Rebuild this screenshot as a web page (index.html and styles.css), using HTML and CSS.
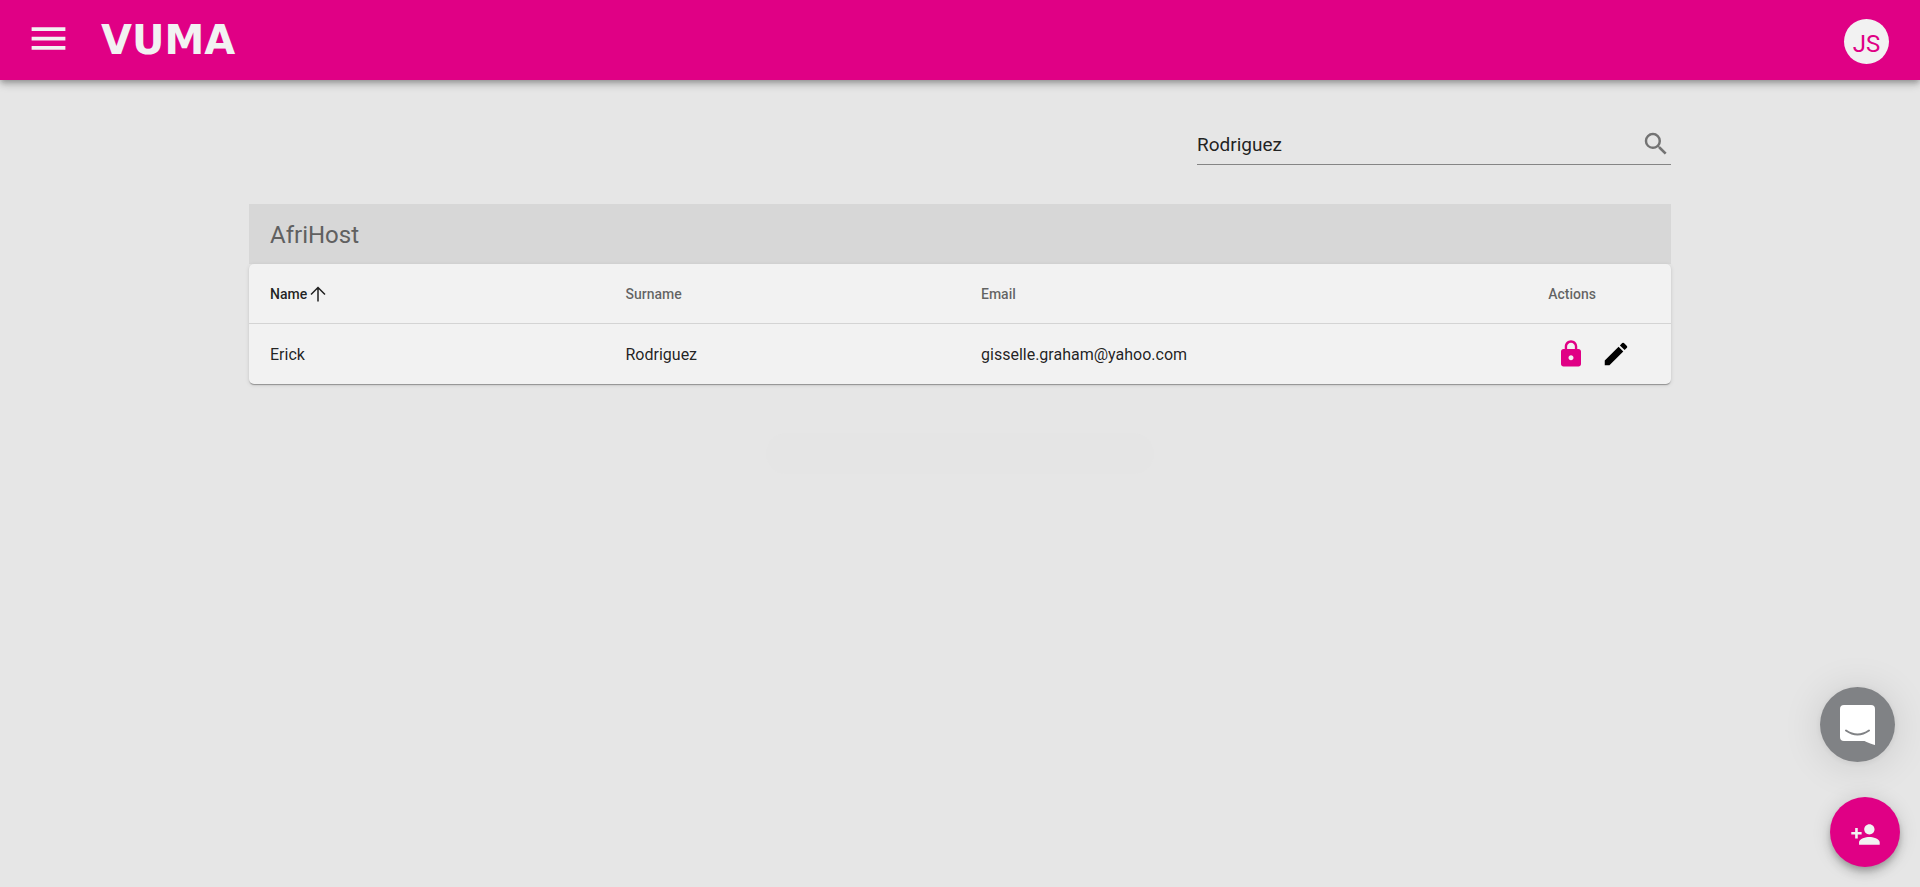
FILE: index.html
```html
<!DOCTYPE html>
<html lang="en">
<head>
<meta charset="utf-8">
<meta name="viewport" content="width=device-width, initial-scale=1">
<title>Vuma – Users</title>
<link rel="stylesheet" href="styles.css">
</head>
<body>
<header class="topbar">
  <button class="menu-button" type="button" aria-label="Open menu">
    <svg class="icon-menu" viewBox="0 0 24 24" aria-hidden="true"><path d="M3 18h18v-2H3v2zm0-5h18v-2H3v2zm0-7v2h18V6H3z"/></svg>
  </button>
  <a class="brand" href="#">VUMA</a>
  <button class="avatar" type="button" aria-label="Account JS">JS</button>
</header>

<main class="page">
  <form class="search" role="search">
    <input class="search-input" type="text" value="Rodriguez" aria-label="Search users">
    <button class="icon-button search-button" type="button" aria-label="Search">
      <svg class="icon" viewBox="0 0 24 24" aria-hidden="true"><path d="M15.5 14h-.79l-.28-.27A6.471 6.471 0 0 0 16 9.5 6.5 6.5 0 1 0 9.5 16c1.61 0 3.09-.59 4.23-1.57l.27.28v.79l5 4.99L20.49 19l-4.99-5zm-6 0C7.01 14 5 11.99 5 9.5S7.01 5 9.5 5 14 7.01 14 9.5 11.99 14 9.5 14z"/></svg>
    </button>
  </form>

  <section class="group">
    <h1 class="group-title">AfriHost</h1>
    <table class="users">
      <thead>
        <tr>
          <th scope="col" aria-sort="ascending">
            <button class="sort sorted" type="button">Name
              <svg class="icon-sort" viewBox="0 0 20 20" aria-hidden="true"><path d="M10 17.500V3.500M3 10.500l7-7 7 7"/></svg>
            </button>
          </th>
          <th scope="col"><button class="sort" type="button">Surname</button></th>
          <th scope="col"><button class="sort" type="button">Email</button></th>
          <th scope="col" class="actions-head">Actions</th>
        </tr>
      </thead>
      <tbody>
        <tr>
          <td>Erick</td>
          <td>Rodriguez</td>
          <td>gisselle.graham@yahoo.com</td>
          <td>
            <div class="actions">
              <button class="icon-button lock" type="button" aria-label="Lock user">
                <svg class="icon" viewBox="0 0 24 24" aria-hidden="true"><path d="M18 8h-1V6c0-2.76-2.24-5-5-5S7 3.24 7 6v2H6c-1.1 0-2 .9-2 2v10c0 1.1.9 2 2 2h12c1.1 0 2-.9 2-2V10c0-1.1-.9-2-2-2zm-6 9c-1.1 0-2-.9-2-2s.9-2 2-2 2 .9 2 2-.9 2-2 2zm3.1-9H8.9V6c0-1.71 1.39-3.1 3.1-3.1 1.71 0 3.1 1.39 3.1 3.1v2z"/></svg>
              </button>
              <button class="icon-button" type="button" aria-label="Edit user">
                <svg class="icon" viewBox="0 0 24 24" aria-hidden="true"><path d="M3 17.25V21h3.75L17.81 9.94l-3.75-3.75L3 17.25zM20.71 7.04a1 1 0 0 0 0-1.41l-2.34-2.34a1 1 0 0 0-1.41 0l-1.83 1.83 3.75 3.75 1.83-1.83z"/></svg>
              </button>
            </div>
          </td>
        </tr>
      </tbody>
    </table>
  </section>
  <div class="pager"></div>
</main>

<button class="float chat" type="button" aria-label="Open chat">
  <svg class="icon-chat" viewBox="0 0 35 40" aria-hidden="true">
    <path class="chat-bubble" d="M4 0h27a4 4 0 0 1 4 4v36s-5-1.300-10.500-4H4a4 4 0 0 1-4-4V4a4 4 0 0 1 4-4z"/>
    <path class="chat-smile" d="M6 25.500q11.500 8 23 0"/>
  </svg>
</button>
<button class="float add" type="button" aria-label="Add user">
  <svg class="icon-add" viewBox="0 0 24 24" aria-hidden="true"><path d="M15 12c2.210 0 4-1.790 4-4s-1.790-4-4-4-4 1.790-4 4 1.790 4 4 4zm-9-2V7H4v3H1v2h3v3h2v-3h3v-2H6zm9 4c-2.670 0-8 1.340-8 4v2h16v-2c0-2.660-5.330-4-8-4z"/></svg>
</button>
</body>
</html>
```
FILE: styles.css
```css
:root {
  --pink: #e00085;
  --paper: #f2f2f2;
  --text: rgba(0, 0, 0, 0.87);
  --muted: rgba(0, 0, 0, 0.6);
}

* { box-sizing: border-box; }

body {
  margin: 0;
  min-height: 100vh;
  background: #e6e6e6;
  color: var(--text);
  font-family: Roboto, "Liberation Sans", sans-serif;
  font-size: 16px;
}

button {
  padding: 0;
  border: 0;
  background: none;
  color: inherit;
  font: inherit;
  cursor: pointer;
}

svg { display: block; fill: currentColor; }

.topbar {
  display: flex;
  align-items: center;
  height: 80px;
  padding: 0 31px 0 26px;
  background: var(--pink);
  color: var(--paper);
  box-shadow: 0 3px 5px -1px rgba(0, 0, 0, 0.2), 0 5px 8px rgba(0, 0, 0, 0.14), 0 1px 10px rgba(0, 0, 0, 0.12);
}

.menu-button { padding-bottom: 3px; }
.icon-menu { width: 45px; height: 45px; }

.brand {
  margin-left: 30px;
  color: inherit;
  font: bold 40px/78px "DejaVu Sans", sans-serif;
  text-decoration: none;
}

.avatar {
  width: 45px;
  height: 45px;
  margin: 3px 0 0 auto;
  border-radius: 50%;
  background: var(--paper);
  color: var(--pink);
  font-size: 24px;
  line-height: 50px;
}

.page {
  width: calc(100% - 48px);
  max-width: 1422px;
  margin: 0 auto;
  padding-top: 44px;
}

.search {
  display: flex;
  align-items: center;
  width: calc(100% / 3);
  height: 41px;
  margin: 0 0 39px auto;
  border-bottom: 1px solid #858585;
}

.search-input {
  flex: 1;
  min-width: 0;
  padding: 2px 0 0;
  border: 0;
  outline: 0;
  background: none;
  color: var(--text);
  font: 19px/30px Roboto, sans-serif;
}

.icon { width: 30px; height: 30px; }
.search-button { color: #737373; }

.group-title {
  margin: 0;
  padding: 2px 21px 0;
  background: #d7d7d7;
  color: #606060;
  font-size: 24px;
  font-weight: 400;
  line-height: 58px;
}

.users {
  width: 100%;
  border-spacing: 0;
  table-layout: fixed;
  border-radius: 5px;
  background: var(--paper);
  box-shadow: 0 2px 1px -1px rgba(0, 0, 0, 0.2), 0 1px 1px rgba(0, 0, 0, 0.14), 0 1px 4px rgba(0, 0, 0, 0.12);
}

.users th,
.users td {
  height: 60px;
  padding: 0 21px;
  text-align: left;
}

.users th {
  border-bottom: 1px solid #d4d4d4;
  color: var(--muted);
  font-size: 14px;
  font-weight: 500;
}

.users .actions-head { padding-right: 75px; text-align: right; }

.sort { display: flex; align-items: center; gap: 1px; }
.sorted { color: var(--text); }
.icon-sort { width: 20px; height: 20px; fill: none; stroke: currentColor; stroke-width: 1.5; }

.actions {
  display: flex;
  justify-content: flex-end;
  gap: 15px;
  padding-right: 19px;
  color: #000;
}

.lock { color: var(--pink); }

.pager {
  width: 388px;
  height: 41px;
  margin: 49px auto 0;
  border-radius: 21px;
  background: #e5e5e5;
}

.float {
  position: fixed;
  display: grid;
  place-items: center;
  border-radius: 50%;
}

.chat {
  right: 25px;
  bottom: 125px;
  width: 75px;
  height: 75px;
  background: #808285;
  box-shadow: 0 1px 8px rgba(0, 0, 0, 0.08), 0 3px 40px rgba(0, 0, 0, 0.12);
}

.icon-chat { width: 35px; height: 40px; }
.chat-bubble { fill: #fff; }
.chat-smile { fill: none; stroke: #808285; stroke-width: 2; stroke-linecap: round; }

.add {
  right: 20px;
  bottom: 20px;
  width: 70px;
  height: 70px;
  padding-top: 4px;
  background: var(--pink);
  color: var(--paper);
  box-shadow: 0 4px 6px -1px rgba(0, 0, 0, 0.2), 0 7px 12px rgba(0, 0, 0, 0.14), 0 1px 20px rgba(0, 0, 0, 0.12);
}

.icon-add { width: 31px; height: 31px; }
```
